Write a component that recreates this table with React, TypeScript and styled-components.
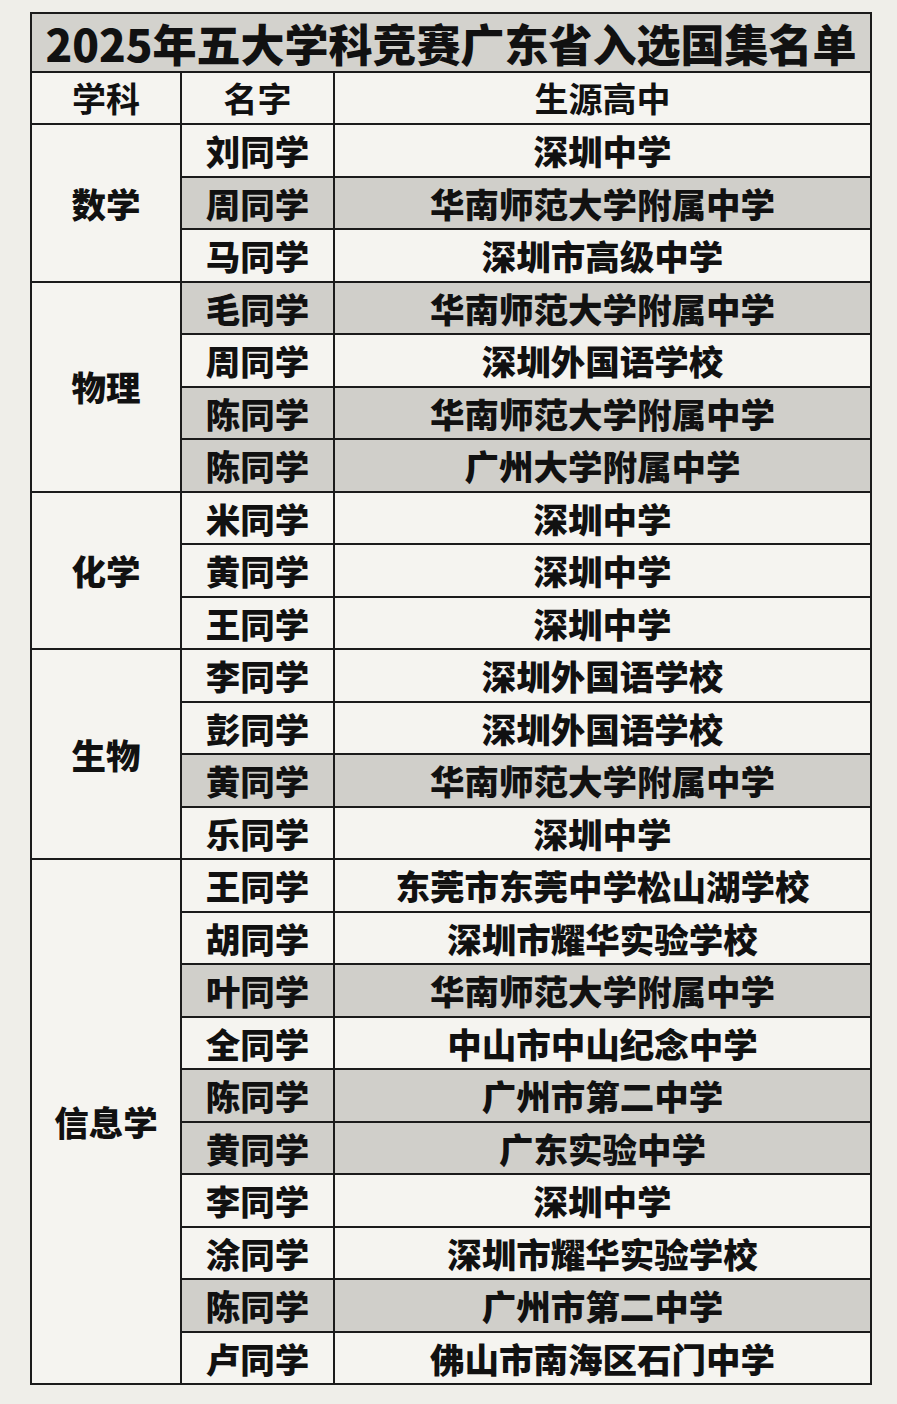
import React from "react"
import styled, { createGlobalStyle } from "styled-components"

const GlobalStyle = createGlobalStyle`
  html, body {
    margin: 0;
    padding: 0;
    background: #efeee9;
  }
  body {
    font-family: "Noto Sans CJK SC", "Noto Sans", sans-serif;
    color: #111;
  }
`

const Page = styled.div`
  width: 897px;
  min-height: 1404px;
  padding: 12px 0 0 30px;
  box-sizing: border-box;
`

const Table = styled.table`
  width: 842px;
  border-collapse: collapse;
  table-layout: fixed;
  background: #f5f4f0;
  border: 2px solid #1b1b1b;
`

const TitleCell = styled.th`
  height: 57px;
  padding: 0;
  background: #d3d2cd;
  border: 2px solid #1b1b1b;
  font-size: 44px;
  font-weight: 900;
  text-align: center;
  vertical-align: middle;
  line-height: 1;
  white-space: nowrap;
`

const HeadCell = styled.th`
  height: 50px;
  padding: 0;
  border: 2px solid #1b1b1b;
  font-size: 34px;
  font-weight: 700;
  text-align: center;
  vertical-align: middle;
  line-height: 1;
`

const Cell = styled.td<{ $shade?: boolean }>`
  height: 50.5px;
  padding: 0;
  border: 2px solid #1b1b1b;
  background: ${(p) => (p.$shade ? "#d0cfca" : "transparent")};
  font-size: 34.5px;
  font-weight: 900;
  text-align: center;
  vertical-align: middle;
  line-height: 1;
  white-space: nowrap;
`

type Row = { name: string; school: string; shade?: boolean }
type Group = { subject: string; rows: Row[] }

const groups: Group[] = [
  {
    subject: "数学",
    rows: [
      { name: "刘同学", school: "深圳中学" },
      { name: "周同学", school: "华南师范大学附属中学", shade: true },
      { name: "马同学", school: "深圳市高级中学" },
    ],
  },
  {
    subject: "物理",
    rows: [
      { name: "毛同学", school: "华南师范大学附属中学", shade: true },
      { name: "周同学", school: "深圳外国语学校" },
      { name: "陈同学", school: "华南师范大学附属中学", shade: true },
      { name: "陈同学", school: "广州大学附属中学", shade: true },
    ],
  },
  {
    subject: "化学",
    rows: [
      { name: "米同学", school: "深圳中学" },
      { name: "黄同学", school: "深圳中学" },
      { name: "王同学", school: "深圳中学" },
    ],
  },
  {
    subject: "生物",
    rows: [
      { name: "李同学", school: "深圳外国语学校" },
      { name: "彭同学", school: "深圳外国语学校" },
      { name: "黄同学", school: "华南师范大学附属中学", shade: true },
      { name: "乐同学", school: "深圳中学" },
    ],
  },
  {
    subject: "信息学",
    rows: [
      { name: "王同学", school: "东莞市东莞中学松山湖学校" },
      { name: "胡同学", school: "深圳市耀华实验学校" },
      { name: "叶同学", school: "华南师范大学附属中学", shade: true },
      { name: "全同学", school: "中山市中山纪念中学" },
      { name: "陈同学", school: "广州市第二中学", shade: true },
      { name: "黄同学", school: "广东实验中学", shade: true },
      { name: "李同学", school: "深圳中学" },
      { name: "涂同学", school: "深圳市耀华实验学校" },
      { name: "陈同学", school: "广州市第二中学", shade: true },
      { name: "卢同学", school: "佛山市南海区石门中学" },
    ],
  },
]

const App = () => {
  return (
    <>
      <GlobalStyle />
      <Page>
        <Table>
          <colgroup>
            <col style={{ width: 150 }} />
            <col style={{ width: 153 }} />
            <col />
          </colgroup>
          <thead>
            <tr>
              <TitleCell colSpan={3}>2025年五大学科竞赛广东省入选国集名单</TitleCell>
            </tr>
            <tr>
              <HeadCell>学科</HeadCell>
              <HeadCell>名字</HeadCell>
              <HeadCell>生源高中</HeadCell>
            </tr>
          </thead>
          <tbody>
            {groups.map((g) =>
              g.rows.map((r, i) => (
                <tr key={g.subject + i}>
                  {i === 0 && <Cell rowSpan={g.rows.length}>{g.subject}</Cell>}
                  <Cell $shade={r.shade}>{r.name}</Cell>
                  <Cell $shade={r.shade}>{r.school}</Cell>
                </tr>
              ))
            )}
          </tbody>
        </Table>
      </Page>
    </>
  )
}

export default App
